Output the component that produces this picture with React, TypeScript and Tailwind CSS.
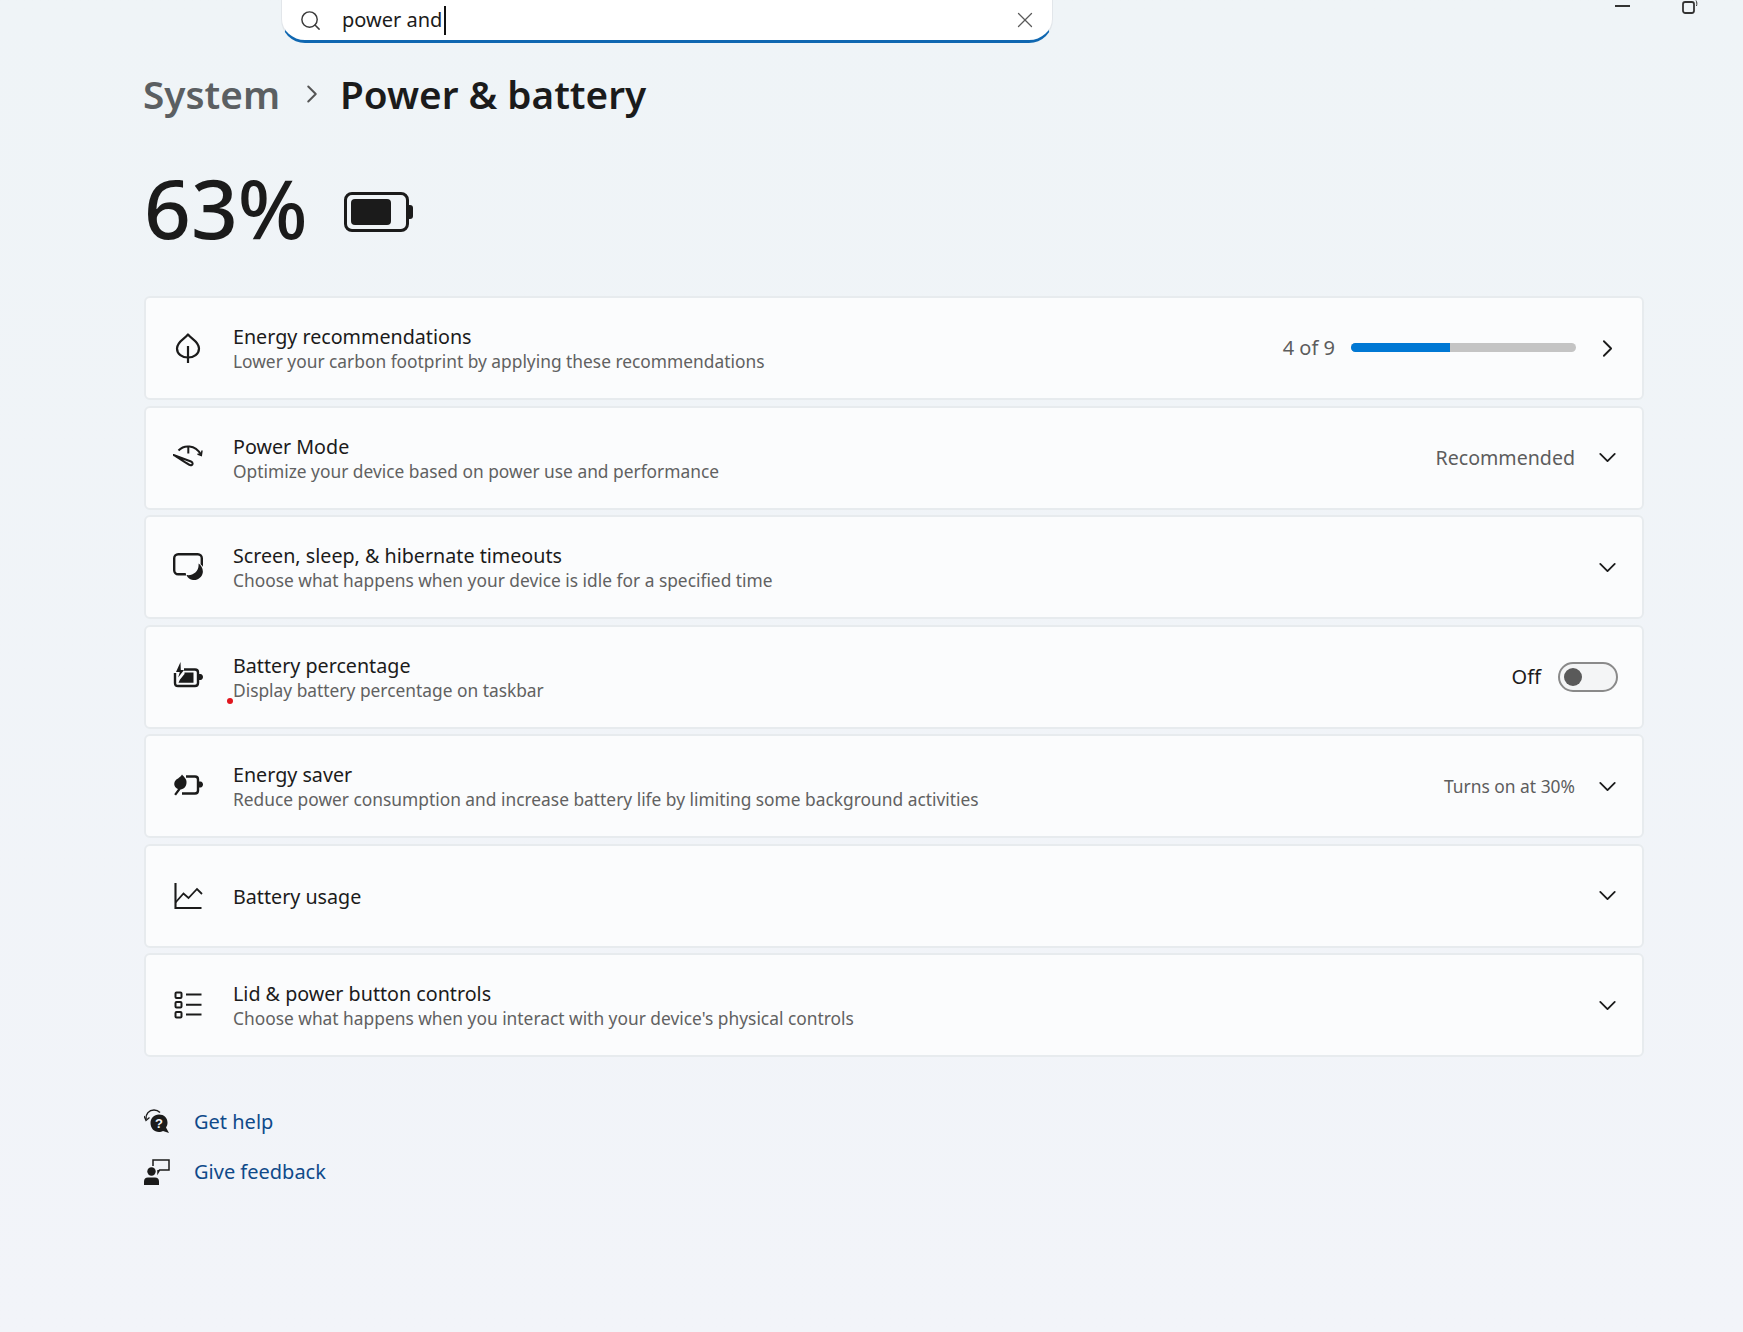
import React from 'react';
import { ChevronDown, ChevronRight, Search, X } from 'lucide-react';

const LeafIcon = () => (
  <svg viewBox="0 0 30 30" className="w-[30px] h-[30px]" fill="none" stroke="#1b1b1b" strokeWidth="2.2">
    <path d="M15 1.5C18.5 6 26 8.5 26 15.5C26 21 20.8 24.5 15 24.5C9.2 24.5 4 21 4 15.5C4 8.5 11.5 6 15 1.5Z" strokeLinejoin="round" />
    <path d="M15 13V30" />
  </svg>
);

const GaugeIcon = () => (
  <svg viewBox="0 0 30 30" className="w-[30px] h-[30px]" fill="none" stroke="#1b1b1b" strokeWidth="2">
    <path d="M5.5 7.5C11 1.5 22 1.5 28 11.5" />
    <path d="M15.3 3V10.5" />
    <path d="M29 7.5L28.3 12.5L24.5 11" strokeWidth="1.5" />
    <path d="M0.5 12L18 18.5C20.5 19.5 20 23 17 22C15.5 21.5 5 14.5 0.5 12Z" strokeLinejoin="round" />
  </svg>
);

const ScreenSleepIcon = () => (
  <svg viewBox="0 0 30 30" className="w-[30px] h-[30px]" fill="none">
    <rect x="1.2" y="2.2" width="27.6" height="20" rx="4" stroke="#1b1b1b" strokeWidth="2.4" />
    <circle cx="22" cy="20" r="9.5" fill="#fbfcfd" />
    <path d="M25.5 11.5C28 13 30.3 17 29.8 20.5C29.2 25 25 28.5 20 28C17.2 27.7 14.5 25.8 13.5 23C19.5 24 26.5 20 25.5 11.5Z" fill="#1b1b1b" />
  </svg>
);

const BatteryChargeIcon = () => (
  <svg viewBox="0 0 30 30" className="w-[30px] h-[30px]" fill="none">
    <path d="M11 7.5H22C24 7.5 25 8.5 25 10.5V21C25 23 24 24 22 24H5C3 24 2 23 2 21V11" stroke="#1b1b1b" strokeWidth="2.4" />
    <path d="M26 12H27.5C29 12 30 13.5 30 15C30 16.5 29 18 27.5 18H26Z" fill="#1b1b1b" />
    <path d="M7.5 0L3 10H6.8L5.2 15.5L11 8H7.8Z" fill="#1b1b1b" />
    <path d="M11.5 10.5H20.5V20.8H5.5L7 17.5L11.5 12Z" fill="#1b1b1b" />
  </svg>
);

const BatteryLeafIcon = () => (
  <svg viewBox="0 0 30 30" className="w-[30px] h-[30px]" fill="none">
    <path d="M13 5.5H22C24 5.5 25 6.5 25 8.5V19.5C25 21.5 24 22.5 22 22.5H9" stroke="#1b1b1b" strokeWidth="2.4" />
    <path d="M26 10.5H27.5C29 10.5 30 12 30 13.5C30 15 29 16.5 27.5 16.5H26Z" fill="#1b1b1b" />
    <path d="M9 3.5C11 6 14 8 13.5 12C13.2 15.5 11 18 7.5 18.5L3 24.5L1.2 23.3L5 18C2 16.5 0.3 14 1.8 10.5C3 8 7 7 9 3.5Z" fill="#1b1b1b" />
  </svg>
);

const ChartIcon = () => (
  <svg viewBox="0 0 30 30" className="w-[30px] h-[30px]" fill="none" stroke="#1b1b1b" strokeWidth="2.1">
    <path d="M2.5 2V27H28.5" />
    <path d="M2.5 21.5L10.5 12.5L15.5 17L24 8L29 13" strokeWidth="1.8" />
  </svg>
);

const ListIcon = () => (
  <svg viewBox="0 0 30 30" className="w-[30px] h-[30px]" fill="none" stroke="#1b1b1b" strokeWidth="2">
    <rect x="2.5" y="2.5" width="6" height="5.5" rx="1" />
    <rect x="2.5" y="12" width="6" height="5.5" rx="1" />
    <rect x="2.5" y="22" width="6" height="5.5" rx="1" />
    <path d="M13 4.5H28.5M13 14.8H28.5M13 24.5H28.5" />
  </svg>
);

const HelpIcon = () => (
  <svg viewBox="0 0 26 26" className="w-[26px] h-[26px]" fill="none">
    <path d="M2 10C1.5 5 5 1 10 1C12.5 1 14.5 2 16 3.5" stroke="#1b1b1b" strokeWidth="1.5" />
    <path d="M0 7L2 11.5L5.5 8.5" stroke="#1b1b1b" strokeWidth="1.3" />
    <path d="M15 5.5C20 5.5 23.5 9 23.5 13.5C23.5 15.5 23 17 22 18.5L25 24L19 22C17.5 22.7 16.5 23 15 23C10 23 6.5 19 6.5 14C6.5 9.5 10 5.5 15 5.5Z" fill="#1b1b1b" />
    <text x="15" y="19" textAnchor="middle" fontSize="13" fontWeight="700" fill="#f2f4f9" fontFamily="'Liberation Sans', sans-serif">?</text>
  </svg>
);

const FeedbackIcon = () => (
  <svg viewBox="0 0 26 26" className="w-[26px] h-[26px]" fill="none">
    <circle cx="7.5" cy="12.5" r="4.2" fill="#1b1b1b" />
    <path d="M0 26V22.5C0 20 1.5 18.5 4 18.5H11C13.5 18.5 15 20 15 22.5V26Z" fill="#1b1b1b" />
    <path d="M9 7V1H25V11H15.5L14 13.5V11" stroke="#1b1b1b" strokeWidth="1.5" />
  </svg>
);

type Row = {
  title: string;
  subtitle?: string;
  icon: React.ReactNode;
  right?: React.ReactNode;
  chevron?: 'down' | 'right' | null;
};

const rows: Row[] = [
  {
    title: 'Energy recommendations',
    subtitle: 'Lower your carbon footprint by applying these recommendations',
    icon: <LeafIcon />,
    chevron: 'right',
    right: (
      <div className="flex items-center -mr-[1px]">
        <span className="text-[20px] text-[#5d5d5d] mr-[16px]">4 of 9</span>
        <div className="w-[225px] h-[9px] mb-[2px] rounded-full bg-[#c4c4c4] overflow-hidden">
          <div className="w-[99px] h-full bg-[#0078d4]" />
        </div>
      </div>
    ),
  },
  {
    title: 'Power Mode',
    subtitle: 'Optimize your device based on power use and performance',
    icon: <GaugeIcon />,
    chevron: 'down',
    right: <span className="text-[19.6px] text-[#5d5d5d]">Recommended</span>,
  },
  {
    title: 'Screen, sleep, & hibernate timeouts',
    subtitle: 'Choose what happens when your device is idle for a specified time',
    icon: <ScreenSleepIcon />,
    chevron: 'down',
  },
  {
    title: 'Battery percentage',
    subtitle: 'Display battery percentage on taskbar',
    icon: <BatteryChargeIcon />,
    right: (
      <div className="flex items-center mr-[5px]">
        <span className="text-[20px] text-[#1b1b1b] mr-[17px]">Off</span>
        <div className="w-[60px] h-[30px] rounded-full border-2 border-[#8a8a8a] bg-[#f4f5f6] flex items-center pl-[4px]">
          <div className="w-[18px] h-[18px] rounded-full bg-[#5a5a5a]" />
        </div>
      </div>
    ),
  },
  {
    title: 'Energy saver',
    subtitle: 'Reduce power consumption and increase battery life by limiting some background activities',
    icon: <BatteryLeafIcon />,
    chevron: 'down',
    right: <span className="text-[17.4px] text-[#5d5d5d]">Turns on at 30%</span>,
  },
  {
    title: 'Battery usage',
    icon: <ChartIcon />,
    chevron: 'down',
  },
  {
    title: 'Lid & power button controls',
    subtitle: "Choose what happens when you interact with your device's physical controls",
    icon: <ListIcon />,
    chevron: 'down',
  },
];

function SettingsRow({ row, dot }: { row: Row; dot?: boolean }) {
  return (
    <div className="relative h-[104px] rounded-[6px] border-2 border-[#e7ebee] bg-[#fbfcfd] flex items-center pl-[27px] pr-[19px]">
      <div className="w-[30px] h-[30px] flex-none">{row.icon}</div>
      <div className="ml-[30px] flex-1 pt-[2px]">
        <div className="text-[19.7px] leading-[25px] text-[#1b1b1b]">{row.title}</div>
        {row.subtitle && <div className="text-[17.35px] leading-[25px] text-[#616161]">{row.subtitle}</div>}
      </div>
      {row.right}
      {row.chevron && (
        <div className="w-[32px] ml-[16px] flex justify-center">
          {row.chevron === 'down' ? (
            <ChevronDown size={29} strokeWidth={1.5} color="#1b1b1b" />
          ) : (
            <ChevronRight size={29} strokeWidth={1.5} color="#1b1b1b" />
          )}
        </div>
      )}
      {dot && <span className="absolute left-[81px] top-[71px] w-[6px] h-[6px] rounded-full bg-[#e0161e]" />}
    </div>
  );
}

export default function App() {
  return (
    <div className="w-[1743px] h-[1332px] overflow-hidden bg-gradient-to-b from-[#eff4f7] to-[#f2f4f9] font-['Noto_Sans',sans-serif]">
      <div className="flex items-start">
        <div className="ml-[281px] w-[772px] h-[43px] flex items-center rounded-b-[24px] bg-white border-x border-x-[#e2e6ea] border-b-[3px] border-b-[#0f67b1] pl-[17px] pr-[14px]">
          <Search size={23} strokeWidth={1.5} color="#3a3a3a" />
          <span className="ml-[20px] text-[20px] text-[#1b1b1b]">power and</span>
          <span className="ml-[2px] w-[2px] h-[29px] bg-[#111]" />
          <X size={26} strokeWidth={1.2} color="#5a5a5a" className="ml-auto" />
        </div>
        <div className="ml-auto mr-[45px] flex items-start">
          <span className="mt-[5px] w-[15px] h-[2px] bg-[#333]" />
          <svg viewBox="0 0 16 14" className="ml-[52px] w-[16px] h-[14px]" fill="none" stroke="#333">
            <rect x="1" y="2" width="11" height="11" rx="2.2" strokeWidth="1.8" />
            <path d="M14 0.5C15 2 15 4 14.5 6" strokeWidth="1" />
          </svg>
        </div>
      </div>

      <div className="ml-[144px] w-[1500px]">
        <div className="mt-[21px] flex items-center h-[60px]">
          <span className="-ml-[1px] text-[38.7px] font-semibold text-[#5b5f62]">System</span>
          <ChevronRight size={30} strokeWidth={1.6} color="#555" className="ml-[17px]" />
          <span className="ml-[13px] text-[38.7px] font-semibold text-[#1b1b1b]">Power &amp; battery</span>
        </div>

        <div className="mt-[37px] flex items-center h-[100px]">
          <span className="-mt-[7px] text-[82px] font-medium text-[#1b1b1b]">63%</span>
          <div className="ml-[36px] mt-[1px] flex items-center">
            <div className="w-[65px] h-[40px] rounded-[8px] border-[3px] border-[#1b1b1b] p-[4px]">
              <div className="w-[40px] h-full rounded-[4px] bg-[#1b1b1b]" />
            </div>
            <div className="w-[4px] h-[14px] rounded-r-[3px] bg-[#1b1b1b]" />
          </div>
        </div>

        <div className="mt-[35px] flex flex-col gap-[5.5px]">
          {rows.map((r, i) => (
            <SettingsRow key={r.title} row={r} dot={i === 3} />
          ))}
        </div>

        <div className="mt-[52px] flex flex-col gap-[24px]">
          <div className="flex items-center h-[26px]">
            <HelpIcon />
            <a className="ml-[24px] text-[20px] text-[#0f4a8a]">Get help</a>
          </div>
          <div className="flex items-center h-[26px]">
            <FeedbackIcon />
            <a className="ml-[24px] text-[20px] text-[#0f4a8a]">Give feedback</a>
          </div>
        </div>
      </div>
    </div>
  );
}
